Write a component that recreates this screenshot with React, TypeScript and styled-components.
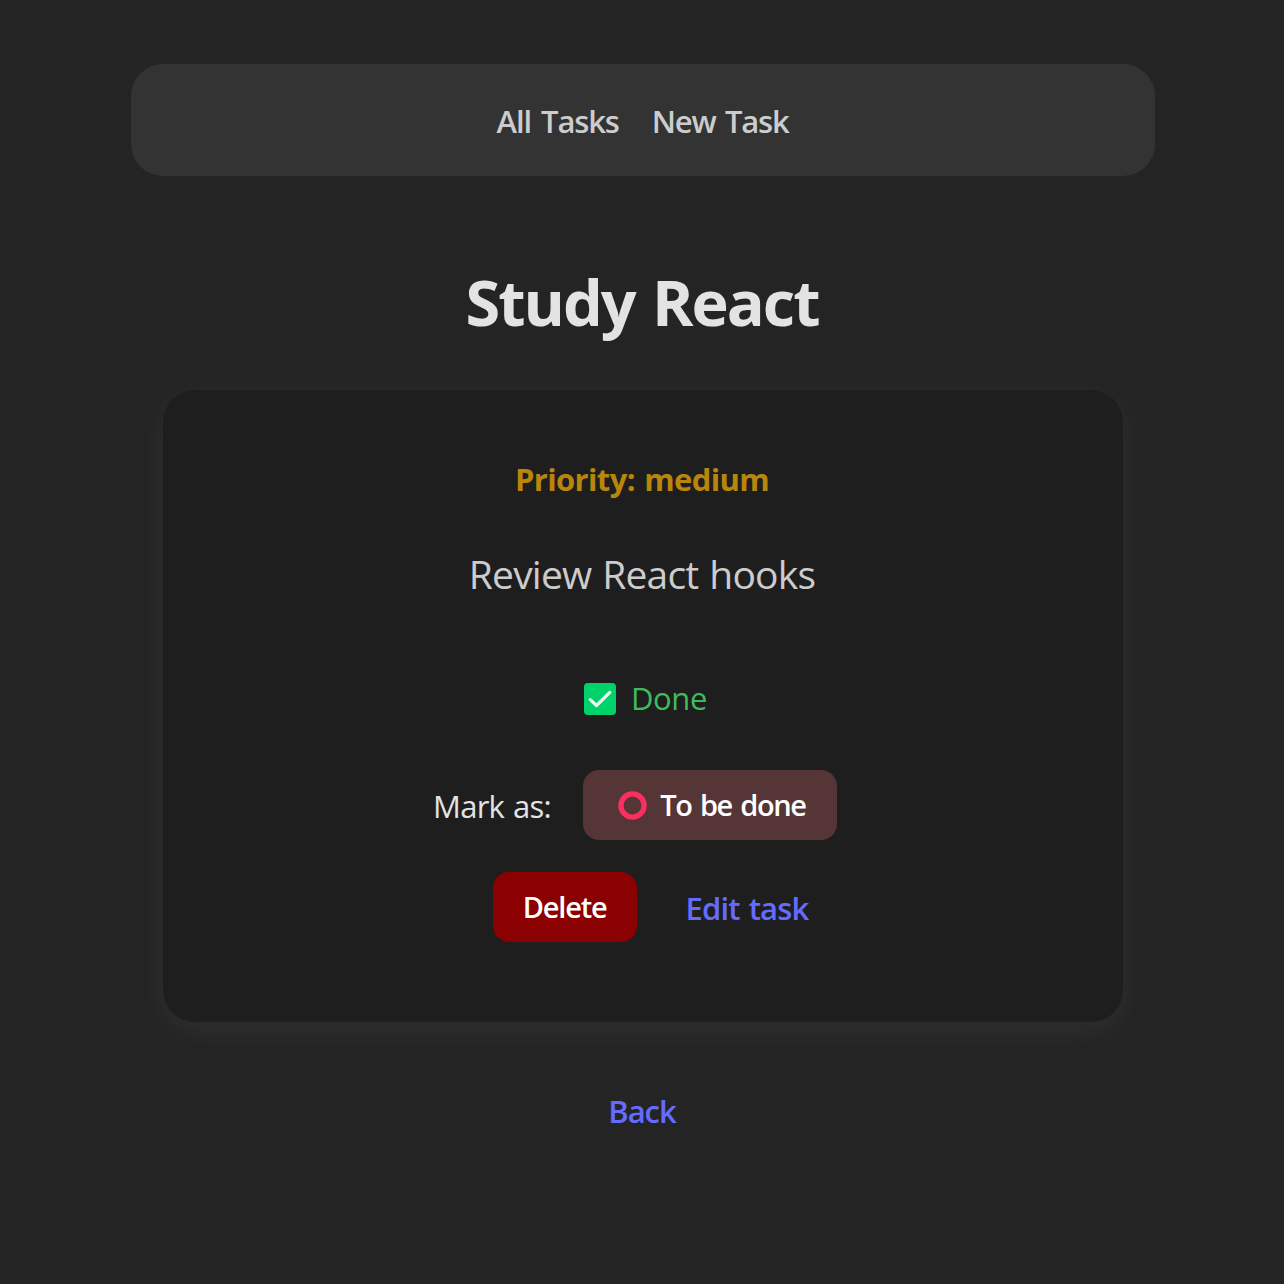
import React from "react";
import styled, { createGlobalStyle } from "styled-components";

const GlobalStyle = createGlobalStyle`
  * { box-sizing: border-box; }
  body {
    margin: 0;
    background: #242424;
    color: #e3e3e3;
    font-family: "Open Sans", "Noto Sans", sans-serif;
    font-size: 31px;
  }
`;

const Page = styled.main`
  display: flex;
  flex-direction: column;
  align-items: center;
  min-height: 1284px;
  padding: 64px 0 0 2px;
`;

const Nav = styled.nav`
  display: flex;
  justify-content: center;
  align-items: center;
  gap: 33px;
  width: 1024px;
  height: 112px;
  padding: 2px 1px 0 0;
  border-radius: 32px;
  background: #333;
`;

const Text = styled.span<{ $tracking?: number; $space?: number }>`
  white-space: nowrap;
  letter-spacing: ${(p) => p.$tracking ?? 0}px;
  word-spacing: ${(p) => p.$space ?? 0}px;
`;

const NavLink = styled(Text).attrs({ as: "a" })`
  color: #ccc;
  font-weight: 600;
`;

const Title = styled.h1`
  margin: 88px 0 50px;
  padding-right: 2px;
  font-size: 63px;
  font-weight: 700;
  line-height: 76px;
`;

const Card = styled.section`
  display: flex;
  flex-direction: column;
  align-items: center;
  width: 960px;
  height: 632px;
  padding-top: 65px;
  border-radius: 32px;
  background: #1e1e1e;
  box-shadow: 0 8px 32px rgba(255, 255, 255, 0.055);
`;

const Priority = styled.p`
  margin: 0;
  padding-right: 2px;
  color: #b8860b;
  font-weight: 700;
  line-height: 48px;
`;

const Description = styled.p`
  margin: 41px 0 75px;
  padding-right: 2px;
  color: #ccc;
  font-size: 39px;
  line-height: 60px;
`;

const Status = styled.div`
  display: flex;
  align-items: center;
  gap: 15px;
  height: 40px;
  margin-bottom: 51px;
  padding-left: 5px;
  color: #3dbb5d;
  line-height: 38px;

  > span { padding-bottom: 2px; }
`;

const Row = styled.div<{ $gap: number; $before?: number; $after?: number }>`
  display: flex;
  align-items: center;
  gap: ${(p) => p.$gap}px;
  height: 70px;
  margin-bottom: 32px;
  padding-left: ${(p) => p.$before ?? 0}px;
  padding-right: ${(p) => p.$after ?? 0}px;

  > span, > a { padding-top: 2px; }
`;

const Button = styled.button<{ $color: string; $width: number; $indent?: number }>`
  display: flex;
  align-items: center;
  justify-content: center;
  gap: 13px;
  width: ${(p) => p.$width}px;
  height: 70px;
  padding: 1px 0 0 ${(p) => p.$indent ?? 0}px;
  border: 0;
  border-radius: 16px;
  background: ${(p) => p.$color};
  color: #fff;
  font: 600 29px/66px "Open Sans", "Noto Sans", sans-serif;

  > span { padding-bottom: 2px; }
`;

const Link = styled(Text).attrs({ as: "a" })`
  color: #646cff;
  font-weight: 600;
`;

const Footer = styled.footer`
  margin-top: 69px;
  padding-right: 2px;
  line-height: 40px;
`;

const CheckIcon = () => (
  <svg width="32" height="32" viewBox="0 0 32 32">
    <rect width="32" height="32" rx="4" fill="#00d26a" />
    <path d="M6.2 16.6l6.3 5.9L25.8 9.4" fill="none" stroke="#f4f4f4" strokeWidth="3.2" strokeLinecap="round" strokeLinejoin="round" />
  </svg>
);

const RingIcon = () => (
  <svg width="29" height="29" viewBox="0 0 29 29">
    <circle cx="14.5" cy="14.5" r="11.6" fill="none" stroke="#f92f60" strokeWidth="5.4" />
  </svg>
);

export default function App() {
  return (
    <>
      <GlobalStyle />
      <Page>
        <Nav>
          <NavLink $tracking={-1.15} $space={3.3}>All Tasks</NavLink>
          <NavLink $tracking={-1.25} $space={2.8}>New Task</NavLink>
        </Nav>
        <Title><Text $tracking={-2} $space={3}>Study React</Text></Title>
        <Card>
          <Priority><Text $tracking={-0.65} $space={2}>Priority: medium</Text></Priority>
          <Description><Text $tracking={-0.8} $space={1.5}>Review React hooks</Text></Description>
          <Status>
            <CheckIcon />
            <Text $tracking={-0.4}>Done</Text>
          </Status>
          <Row $gap={32} $after={16}>
            <Text $tracking={-0.75} $space={1.6}>Mark as:</Text>
            <Button $color="#553535" $width={254} $indent={4}>
              <RingIcon />
              <Text $tracking={-1.4} $space={2.3}>To be done</Text>
            </Button>
          </Row>
          <Row $gap={49} $before={15}>
            <Button $color="#8b0000" $width={144}>
              <Text $tracking={-1.2}>Delete</Text>
            </Button>
            <Link $tracking={-0.85} $space={1.8}>Edit task</Link>
          </Row>
        </Card>
        <Footer><Link $tracking={-1}>Back</Link></Footer>
      </Page>
    </>
  );
}
